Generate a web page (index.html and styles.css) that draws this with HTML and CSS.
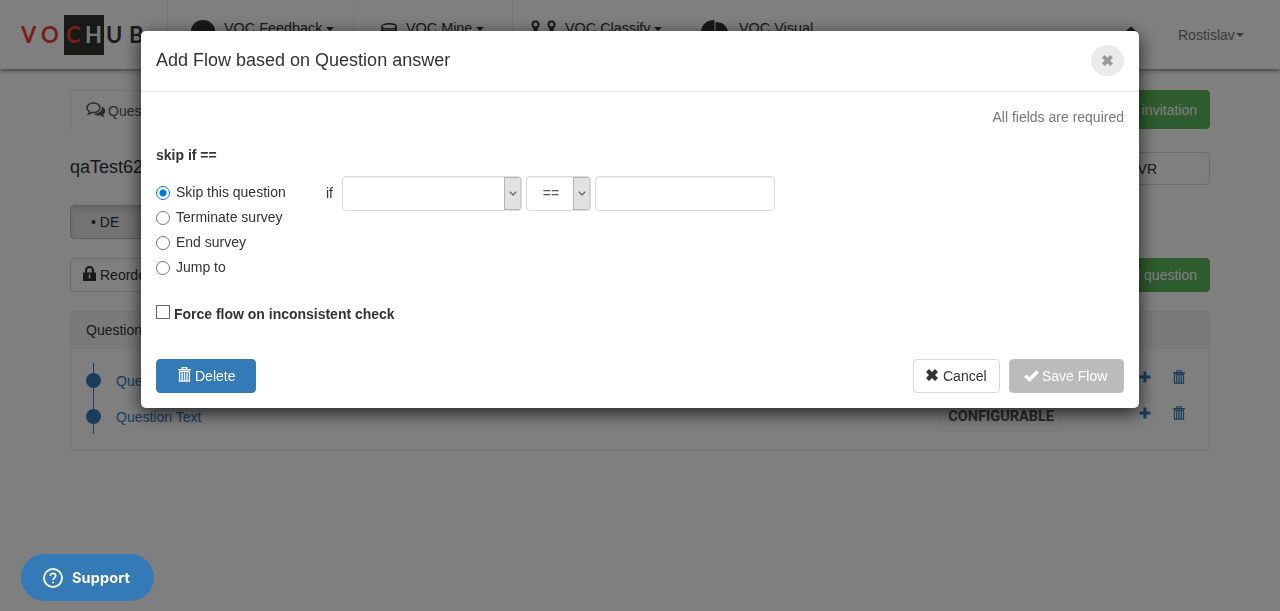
FILE: index.html
```html
<!DOCTYPE html>
<html lang="en">
<head>
<meta charset="utf-8">
<title>VOCHUB</title>
<link rel="stylesheet" href="styles.css">
</head>
<body>
<svg class="defs" width="0" height="0" aria-hidden="true">
  <symbol id="trash" viewBox="0 0 14 16"><path fill="none" stroke="currentColor" stroke-width="1.400" d="M0 2.800h14M4.600 2.400V.7h4.800v1.700M1.700 4.800v10.400h10.600V4.800M1.200 4.700h11.600M4.400 5.500v9M7 5.500v9M9.600 5.500v9"/></symbol>
  <symbol id="plus" viewBox="0 0 12 12"><path fill="currentColor" d="M4.400.5h3v4h4.100v3H7.400v4h-3v-4H.5v-3h3.900z"/></symbol>
  <symbol id="cross" viewBox="0 0 12 12"><path fill="currentColor" d="M3 0l3 3 3-3 3 3-3 3 3 3-3 3-3-3-3 3-3-3 3-3-3-3z"/></symbol>
  <symbol id="chevron" viewBox="0 0 8 5"><path fill="none" stroke="#555" stroke-width="1.100" d="M.7.7L4 4 7.300.7"/></symbol>
</svg>
<header class="topbar">
  <div class="logo"><span class="v">V</span><span class="o">O</span><span class="box"><span class="c">C</span><span class="h">H</span></span><span class="u">U</span><span class="b">B</span></div>
  <nav class="nav">
    <a class="item feedback"><svg width="24" height="22" viewBox="0 0 24 22"><ellipse cx="12" cy="11" rx="12" ry="11" fill="#333"/></svg><span>VOC Feedback</span><i class="caret"></i></a>
    <a class="item mine"><svg width="16" height="18" viewBox="0 0 16 18"><g fill="none" stroke="#333" stroke-width="1.400"><ellipse cx="8" cy="3.400" rx="7.200" ry="2.600"/><path d="M.8 3.400v2c0 3.500 14.400 3.500 14.400 0v-2M.8 6v3c0 3.500 14.400 3.500 14.400 0V6M.8 10v3c0 3.500 14.400 3.500 14.400 0v-3"/></g></svg><span>VOC Mine</span><i class="caret"></i></a>
    <a class="item classify"><svg width="26" height="22" viewBox="0 0 26 22"><g fill="none" stroke="#333"><circle cx="4.500" cy="4.500" r="3" stroke-width="2"/><circle cx="20.500" cy="4.500" r="3" stroke-width="2"/><path d="M4.500 7v13M20.500 7v7l-16 3" stroke-width="4"/></g></svg><span>VOC Classify</span><i class="caret"></i></a>
    <a class="item visual"><svg width="28" height="24" viewBox="0 0 28 24"><path fill="#333" d="M13.500 0v12L5 21C-4 14 0 0 13.500 0zM14.500 2c7 0 12 4 12.500 10H14.500z"/></svg><span>VOC Visual</span></a>
  </nav>
  <svg class="bell" width="16" height="18" viewBox="0 0 16 18"><path fill="#333" d="M8 0c1.300 0 2 .8 2 1.800 3 1 4 3.200 4 6.200l1 5H1l1-5c0-3 1-5.200 4-6.200C6 .8 6.700 0 8 0z"/></svg>
  <div class="user">Rostislav<i class="caret"></i></div>
</header>
<main class="page">
  <div class="row tabs">
    <div class="tab"><svg width="20" height="17" viewBox="0 0 20 17"><path fill="none" stroke="#555" stroke-width="1.500" d="M7.500 1C3.700 1 1 3.200 1 5.800c0 1.700 1 3 2.500 3.900L2.500 12l3.300-1.500C11 11 14 8.700 14 5.800 14 3.200 11.300 1 7.500 1z"/><path fill="#555" d="M15.700 4.500c4.600 2 4.400 6 1.500 8 .2 1 .8 1.700 1.300 2.400-1.500.1-2.800-.6-3.700-1.500-2.800.3-5.300-.1-7-1.500 5.300 0 8.900-3.400 7.900-7.400z"/></svg>Questions</div>
    <button class="btn green invite">Send invitation</button>
  </div>
  <div class="row heading"><h1>qaTest62</h1><button class="btn ivr">IVR</button></div>
  <div class="row language"><button class="btn active">• DE</button></div>
  <div class="row tools">
    <button class="btn reorder"><svg width="13" height="15" viewBox="0 0 13 15"><path fill="none" stroke="#333" stroke-width="2.200" d="M3 8V4.500a3.500 3.500 0 0 1 7 0V8"/><path fill="#333" d="M0 6.500h13V15H0z"/><path stroke="#fff" stroke-width="1.500" d="M6.500 8.500v4"/></svg>Reorder</button>
    <button class="btn green add">Add question</button>
  </div>
  <section class="panel">
    <div class="panel-head">Questions</div>
    <div class="tree">
      <div class="question"><i class="dot"></i><a>Question Text</a><span class="actions"><svg width="12" height="12"><use href="#plus"/></svg><svg width="12" height="14"><use href="#trash"/></svg></span></div>
      <div class="question"><i class="dot"></i><a>Question Text</a><b class="tag">CONFIGURABLE</b><span class="actions"><svg width="12" height="12"><use href="#plus"/></svg><svg width="12" height="14"><use href="#trash"/></svg></span></div>
    </div>
  </section>
</main>
<div class="backdrop">
  <div class="modal" role="dialog">
    <div class="modal-head"><h2>Add Flow based on Question answer</h2><button class="close"><svg width="11" height="11"><use href="#cross"/></svg></button></div>
    <div class="modal-body">
      <p class="note">All fields are required</p>
      <p class="rule">skip if ==</p>
      <div class="flow">
        <div class="choices">
          <label><i class="radio on"></i>Skip this question</label>
          <label><i class="radio"></i>Terminate survey</label>
          <label><i class="radio"></i>End survey</label>
          <label><i class="radio"></i>Jump to</label>
        </div>
        <div class="condition">
          <span class="if">if</span>
          <div class="select wide"><span></span><i><svg width="8" height="5"><use href="#chevron"/></svg></i></div>
          <div class="select"><span>==</span><i><svg width="8" height="5"><use href="#chevron"/></svg></i></div>
          <div class="field"></div>
        </div>
      </div>
      <label class="force"><i class="check"></i><b>Force flow on inconsistent check</b></label>
      <div class="footer">
        <button class="btn delete"><svg width="13" height="15"><use href="#trash"/></svg>Delete</button>
        <button class="btn cancel"><svg width="12" height="12"><use href="#cross"/></svg>Cancel</button>
        <button class="btn save"><svg width="15" height="12" viewBox="0 0 15 12"><path fill="#fff" d="M0 7l2.600-2.600 3 2.800L12.300 0 15 2.600 5.800 12z"/></svg>Save Flow</button>
      </div>
    </div>
  </div>
</div>
<button class="support"><svg width="20" height="20" viewBox="0 0 20 20"><circle cx="10" cy="10" r="9" fill="none" stroke="#fff" stroke-width="1.900"/><path fill="none" stroke="#fff" stroke-width="1.700" d="M7.300 8c0-3.700 5.400-3.400 5.400-.2 0 1.900-2.600 2-2.600 4.200"/><circle cx="10.100" cy="14.500" r="1.100" fill="#fff"/></svg>Support</button>
</body>
</html>
```
FILE: styles.css
```css
* { box-sizing: border-box; }
body { margin: 0; height: 611px; overflow: hidden; background: #fff; color: #333; font: 14px/20px "Liberation Sans", Arial, sans-serif; }
h1, h2, p { margin: 0; font-weight: normal; }
svg { flex: none; display: block; }
.defs { position: absolute; }
button { font: inherit; }

.topbar { display: flex; height: 69px; box-shadow: 0 1px 5px rgba(0,0,0,.6); }
.logo { display: flex; width: 167px; height: 40px; margin-top: 15px; padding-left: 21px; font: bold 22px/40px Lato, sans-serif; color: #393936; }
.logo .v { width: 20px; color: #f03a35; }
.logo .o { width: 23px; color: #f03a35; }
.logo .box { display: flex; width: 40px; height: 40px; background: #333330; padding-left: 2px; }
.logo .c { width: 19px; color: #f03a35; }
.logo .h { color: #f0f0f0; }
.logo .u { width: 23px; padding-left: 2px; }
.logo .b { padding-left: 2px; }
.nav { display: flex; height: 69px; }
.item { display: flex; align-items: flex-start; padding-top: 18px; border-left: 1px solid #eee; font-size: 14.400px; }
.item svg { margin-top: 2px; }
.caret { border: 4px solid transparent; border-top-color: #333; border-bottom: 0; margin: 9px 0 0 5px; }
.feedback { width: 186px; padding-left: 23px; gap: 9px; }
.feedback .caret { margin-left: -5px; }
.mine { width: 159px; padding-left: 27px; gap: 9px; }
.mine svg { margin-top: 5px; }
.mine .caret, .classify .caret { margin-left: -5px; }
.classify { width: 171px; padding-left: 18px; gap: 8px; }
.visual { border-color: transparent; padding-left: 17px; gap: 10px; }
.bell { margin: 27px 0 0 auto; }
.user { display: flex; width: 141px; padding: 25px 0 0 39px; color: #777; }
.user .caret { border-top-color: #777; margin: 8px 0 0 1px; }

.page { width: 1140px; margin: 21px auto 0; }
.row { display: flex; justify-content: space-between; }
.btn { display: flex; align-items: center; height: 34px; border: 1px solid #d9d9d9; border-radius: 4px; background: #fff; color: #333; padding: 0 12px; white-space: nowrap; }
.green { background: #5cb85c; border-color: #5cb85c; color: #fff; }
.tabs { height: 62px; }
.tab { display: flex; gap: 2px; height: 42px; width: 120px; padding: 10px 0 0 15px; border: 1px solid #eaeaea; border-bottom: 0; border-radius: 4px 4px 0 0; color: #555; }
.tab svg { margin-top: 1px; }
.invite { height: 39px; }
.heading { height: 53px; }
.heading h1 { font-size: 18px; line-height: 30px; }
.ivr { height: 33px; padding: 0 52px; }
.language { height: 53px; }
.active { width: 150px; padding-left: 20px; background: #e6e6e6; border-color: #bbb; box-shadow: inset 0 3px 5px rgba(0,0,0,.125); }
.tools { height: 53px; }
.reorder { gap: 4px; }
.reorder svg { margin-top: -3px; }
.panel { height: 139px; border: 1px solid #eaeaea; border-radius: 4px; box-shadow: 0 1px 1px rgba(0,0,0,.05); }
.panel-head { height: 37px; background: #f5f5f5; padding: 8px 15px; }
.tree { height: 71px; margin: 14px 15px 0; background: linear-gradient(#337ab7,#337ab7) 7px 0 / 1px 100% no-repeat; }
.question { display: flex; align-items: center; height: 36px; color: #337ab7; }
.dot { width: 15px; height: 15px; border-radius: 50%; background: #337ab7; margin: -2px 15px 0 0; }
.actions { display: flex; gap: 22px; margin: -9px 9px 0 auto; align-items: center; }
.tag { width: 122px; height: 28px; margin-left: 738px; padding: 3px 8px; border: 1px solid #f3f3f3; border-radius: 3px; color: #555; font: bold 14.500px/20px Roboto, sans-serif; }

.backdrop { position: fixed; inset: 0; display: flex; justify-content: center; align-items: flex-start; padding-top: 31px; background: rgba(0,0,0,.5); }
.modal { width: 998px; height: 377px; background: #fff; border-radius: 5px; box-shadow: 0 5px 18px rgba(0,0,0,.75); }
.modal-head { display: flex; justify-content: space-between; height: 61px; padding: 14px 15px; border-bottom: 1px solid #e8e8e8; }
.modal-head h2 { font-size: 18px; line-height: 30px; }
.close { display: flex; align-items: center; justify-content: center; width: 33px; height: 31px; border: 0; border-radius: 50%; background: #ebebeb; color: #999; }
.modal-body { padding: 15px; }
.note { text-align: right; color: #777; }
.rule { margin-top: 18px; font-weight: bold; }
.flow { display: flex; margin-top: 11px; }
.choices { width: 170px; padding-top: 6px; }
.choices label { display: flex; align-items: center; gap: 6px; height: 25px; line-height: 20px; padding-bottom: 5px; }
.radio { width: 14px; height: 14px; border: 1px solid #777; border-radius: 50%; margin-top: 2px; }
.radio.on { border-color: #0078d7; background: radial-gradient(circle, #0078d7 3px, #fff 4px); }
.condition { display: flex; gap: 4px; height: 35px; }
.if { width: 12px; padding-top: 7px; }
.field, .select { height: 35px; border: 1px solid #dcdcdc; border-radius: 4px; box-shadow: inset 0 1px 1px rgba(0,0,0,.075); }
.field { width: 180px; }
.select { display: flex; width: 65px; color: #555; line-height: 32px; overflow: hidden; }
.select.wide { width: 180px; }
.select span { flex: 1; text-align: center; padding-left: 2px; }
.select i { display: flex; align-items: center; justify-content: center; width: 17px; border: 1px solid #b5b5b5; border-right-color: #ccc; background: #e1e1e1; }
.force { display: flex; gap: 4px; margin-top: 22px; letter-spacing: -.01px; }
.check { width: 14px; height: 14px; margin-top: 1px; border: 1px solid #666; }
.footer { display: flex; margin-top: 35px; }
.delete { width: 100px; gap: 4px; padding-left: 21px; background: #337ab7; border-color: #337ab7; color: #fff; margin-right: auto; }
.delete svg { margin-top: -3px; }
.cancel { width: 87px; gap: 5px; margin-right: 9px; }
.cancel svg { margin-top: -2px; }
.save { width: 115px; gap: 3px; padding-left: 14px; background: #bbb; border-color: #c2c2c2; color: #fff; }
.support { position: fixed; left: 21px; top: 554px; display: flex; align-items: center; gap: 9px; width: 133px; height: 47px; padding: 0 0 0 22px; border: 0; border-radius: 24px; background: #337ab7; color: #fff; font: bold 14.500px Inter, sans-serif; letter-spacing: .1px; }
```
